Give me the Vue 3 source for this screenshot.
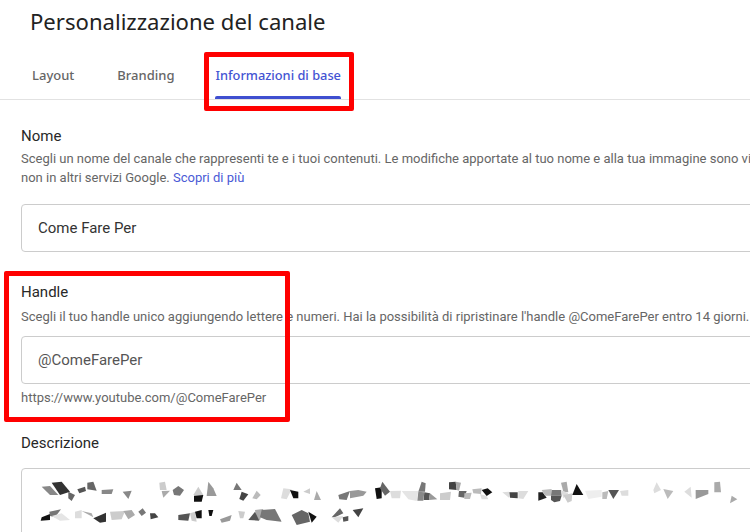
<script setup>
const tabs = [
  { label: "Layout" },
  { label: "Branding" },
  { label: "Informazioni di base", active: true },
];

// pixelated text of the description, in 3x coordinates of the page (y from 430)
const blobs = [
  ["#888", "125,170 150,168 175,195 150,195"],
  ["#333", "155,158 185,155 210,185 180,195"],
  ["#666", "205,185 225,195 215,213 205,205"],
  ["#555", "232,178 255,170 258,183 238,190"],
  ["#666", "262,158 280,155 290,182 262,178"],
  ["#888", "305,180 340,178 335,192 305,192"],
  ["#888", "368,185 395,182 385,207"],
  ["#ccc", "478,158 495,155 500,180 480,180"],
  ["#aaa", "485,183 510,182 490,203"],
  ["#777", "518,180 535,168 552,180 540,197 522,195"],
  ["#ccc", "595,170 610,195 580,195"],
  ["#111", "582,197 610,195 605,215 582,215"],
  ["#999", "625,155 640,175 650,198 620,198"],
  ["#777", "710,158 725,180 700,180"],
  ["#444", "725,185 745,193 730,212 718,207"],
  ["#bbb", "770,182 782,195 770,208 757,205"],
  ["#ddd", "850,175 875,178 860,208 843,205"],
  ["#111", "870,180 895,185 895,205 880,205"],
  ["#ccc", "910,185 930,175 930,192"],
  ["#aaa", "950,183 963,210 942,210"],
  ["#777", "1015,195 1050,183 1040,210 1018,208"],
  ["#999", "1050,183 1075,180 1100,185 1090,197 1050,205"],
  ["#111", "1125,175 1145,172 1145,205 1130,207"],
  ["#666", "1147,155 1170,185 1155,197 1140,175"],
  ["#ddd", "1170,183 1203,182 1200,205 1175,205"],
  ["#e5e5e5", "1205,183 1255,183 1250,213 1225,208"],
  ["#777", "1265,155 1277,160 1275,185 1255,185"],
  ["#888", "1255,185 1273,187 1270,212 1252,212"],
  ["#555", "1273,187 1290,190 1287,210 1271,210"],
  ["#999", "1290,190 1312,208 1287,210"],
  ["#ccc", "1320,190 1353,185 1350,210 1320,210"],
  ["#444", "1347,157 1367,155 1370,180 1347,178"],
  ["#aaa", "1367,155 1383,158 1377,182 1370,180"],
  ["#666", "1377,183 1400,183 1393,203 1375,200"],
  ["#bbb", "1393,190 1415,188 1410,207 1393,207"],
  ["#bbb", "1417,178 1445,175 1443,192 1420,190"],
  ["#ddd", "1440,192 1460,198 1465,208 1445,208"],
  ["#111", "1445,180 1463,175 1477,187 1460,198"],
  ["#ddd", "1507,187 1527,185 1527,203"],
  ["#444", "1528,187 1553,187 1553,205 1530,203"],
  ["#ddd", "1555,183 1585,183 1570,207 1555,205"],
  ["#222", "1615,187 1628,187 1640,203 1615,212"],
  ["#bbb", "1625,180 1655,177 1653,197 1635,197"],
  ["#777", "1655,180 1683,180 1685,197 1653,197"],
  ["#555", "1653,197 1685,197 1680,213 1663,217 1653,210"],
  ["#aaa", "1683,158 1700,155 1705,187 1690,185"],
  ["#ddd", "1683,180 1705,190 1690,205"],
  ["#ccc", "1690,195 1717,190 1715,213 1703,218"],
  ["#111", "1730,162 1750,195 1717,195"],
  ["#eee", "1755,182 1805,180 1805,200 1765,207"],
  ["#bbb", "1807,187 1825,183 1820,207 1807,207"],
  ["#555", "1825,180 1857,180 1840,207"],
  ["#ddd", "1860,183 1885,180 1885,197 1865,197"],
  ["#ddd", "1970,157 1983,180 1963,190 1960,180"],
  ["#bbb", "1990,177 2020,183 2003,207"],
  ["#ddd", "2072,170 2075,203 2053,185"],
  ["#999", "2087,180 2125,180 2125,192 2087,207"],
  ["#aaa", "2143,157 2160,155 2163,187 2143,187"],
  ["#aaa", "2195,197 2212,208 2190,220"],
  ["#111", "125,262 150,252 150,270 122,272"],
  ["#777", "148,245 183,238 165,262 150,258"],
  ["#e5e5e5", "155,258 185,250 210,270 180,272"],
  ["#ddd", "225,245 245,240 245,265 225,265"],
  ["#aaa", "245,243 275,250 280,262"],
  ["#333", "280,265 318,248 318,275 300,278"],
  ["#ccc", "330,245 375,243 365,268 335,270"],
  ["#aaa", "370,243 395,240 405,255 385,268"],
  ["#777", "415,245 428,235 438,248 425,258"],
  ["#444", "450,250 465,250 475,262 452,268"],
  ["#555", "535,255 570,250 565,272 535,270"],
  ["#ccc", "570,250 585,245 590,275 575,272"],
  ["#111", "585,245 605,240 605,265 590,265"],
  ["#111", "625,240 640,240 635,258 628,258"],
  ["#999", "660,268 695,255 690,272 665,278"],
  ["#ccc", "715,243 735,245 730,265 720,265"],
  ["#aaa", "765,240 790,237 780,270 770,270"],
  ["#555", "745,270 765,245 778,272"],
  ["#777", "785,240 825,237 845,275 800,270 780,262"],
  ["#666", "875,255 905,240 925,250 930,275 890,285"],
  ["#111", "925,245 950,260 935,278"],
  ["#666", "995,262 1020,235 1030,250 1005,262"],
  ["#ddd", "995,262 1030,258 1015,278"],
  ["#555", "1028,262 1045,258 1045,272 1030,275"],
  ["#444", "1058,240 1090,235 1075,262"],
];
</script>

<template>
  <div class="page">
    <h1 class="title">Personalizzazione del canale</h1>
    <div class="tabs">
      <div
        v-for="tab in tabs"
        :key="tab.label"
        class="tab"
        :class="{ active: tab.active }"
      >
        {{ tab.label }}
      </div>
    </div>

    <div class="form">
      <section class="field nome">
        <div class="label">Nome</div>
        <div class="hint first">
          Scegli un nome del canale che rappresenti te e i tuoi contenuti. Le
          modifiche apportate al tuo nome e alla tua immagine sono visibili solo
          su YouTube e
        </div>
        <div class="hint">
          non in altri servizi Google. <a class="link">Scopri di più</a>
        </div>
        <div class="input nome-input">Come Fare Per</div>
      </section>

      <section class="field handle">
        <div class="label">Handle</div>
        <div class="hint first">
          Scegli il tuo handle unico aggiungendo lettere e numeri. Hai la
          possibilità di ripristinare l'handle @ComeFarePer entro 14 giorni.
        </div>
        <div class="input handle-input">@ComeFarePer</div>
        <div class="hint url">https://www.youtube.com/@ComeFarePer</div>
      </section>

      <section class="field descr">
        <div class="label">Descrizione</div>
        <div class="textarea">
          <svg
            class="blobs"
            viewBox="120 150 2130 156"
            width="710"
            height="52"
          >
            <polygon
              v-for="(b, i) in blobs"
              :key="i"
              :fill="b[0]"
              :points="b[1]"
            />
          </svg>
        </div>
      </section>
    </div>

    <div class="mark mark-tab"></div>
    <div class="mark mark-handle"></div>
  </div>
</template>

<style scoped>
.page {
  position: relative;
  width: 750px;
  height: 532px;
  overflow: hidden;
  background: #fff;
  font-family: Roboto, "Liberation Sans", sans-serif;
  color: #282828;
}
.title {
  margin: 0;
  padding: 7px 0 0 30px;
  height: 48px;
  box-sizing: border-box;
  font-family: "Noto Sans", sans-serif;
  font-size: 22.1px;
  line-height: 28px;
  font-weight: 400;
  color: #222;
}
.tabs {
  display: flex;
  height: 52px;
  box-sizing: border-box;
  padding-left: 32px;
  gap: 43px;
  border-bottom: 1px solid #e2e2e2;
}
.tab {
  position: relative;
  padding-top: 17px;
  font-family: "Noto Sans", sans-serif;
  font-size: 13px;
  line-height: 20px;
  font-weight: 500;
  color: #666;
}
.tab.active {
  margin-left: -2px;
  font-size: 12.8px;
  color: #4353d3;
}
.tab.active::after {
  content: "";
  position: absolute;
  left: 0;
  right: 0;
  bottom: 0;
  height: 3px;
  border-radius: 2px 2px 0 0;
  background: #3f4fd0;
}
.form {
  padding-left: 21px;
}
.field {
  width: 800px;
}
.nome {
  padding-top: 26px;
}
.handle {
  padding-top: 30px;
}
.descr {
  padding-top: 25px;
}
.label {
  font-size: 15px;
  line-height: 20px;
  font-weight: 400;
  color: #282828;
}
.hint {
  font-size: 13px;
  line-height: 21px;
  color: #666;
  white-space: nowrap;
}
.nome .hint {
  line-height: 19px;
}
.nome .hint.first {
  margin-top: 3px;
}
.handle .hint.first {
  margin-top: 4px;
}
.link {
  color: #4a5ad6;
}
.input {
  box-sizing: border-box;
  display: flex;
  align-items: center;
  padding-left: 16px;
  border: 1px solid #ccc;
  border-radius: 4px;
  font-size: 15px;
  color: #333;
}
.nome-input {
  height: 48px;
  margin-top: 17px;
}
.handle-input {
  height: 48px;
  margin-top: 9px;
  color: #555;
}
.url {
  margin-top: 3px;
}
.textarea {
  box-sizing: border-box;
  height: 100px;
  margin-top: 15px;
  padding: 11px 0 0 18px;
  border: 1px solid #ccc;
  border-radius: 4px;
}
.blobs {
  display: block;
  filter: blur(0.5px);
}
.mark {
  position: absolute;
  box-sizing: border-box;
  border: 5px solid #f00;
  border-radius: 2px;
}
.mark-tab {
  left: 204px;
  top: 52px;
  width: 150px;
  height: 59px;
}
.mark-handle {
  left: 4px;
  top: 271px;
  width: 286px;
  height: 151px;
}
</style>
